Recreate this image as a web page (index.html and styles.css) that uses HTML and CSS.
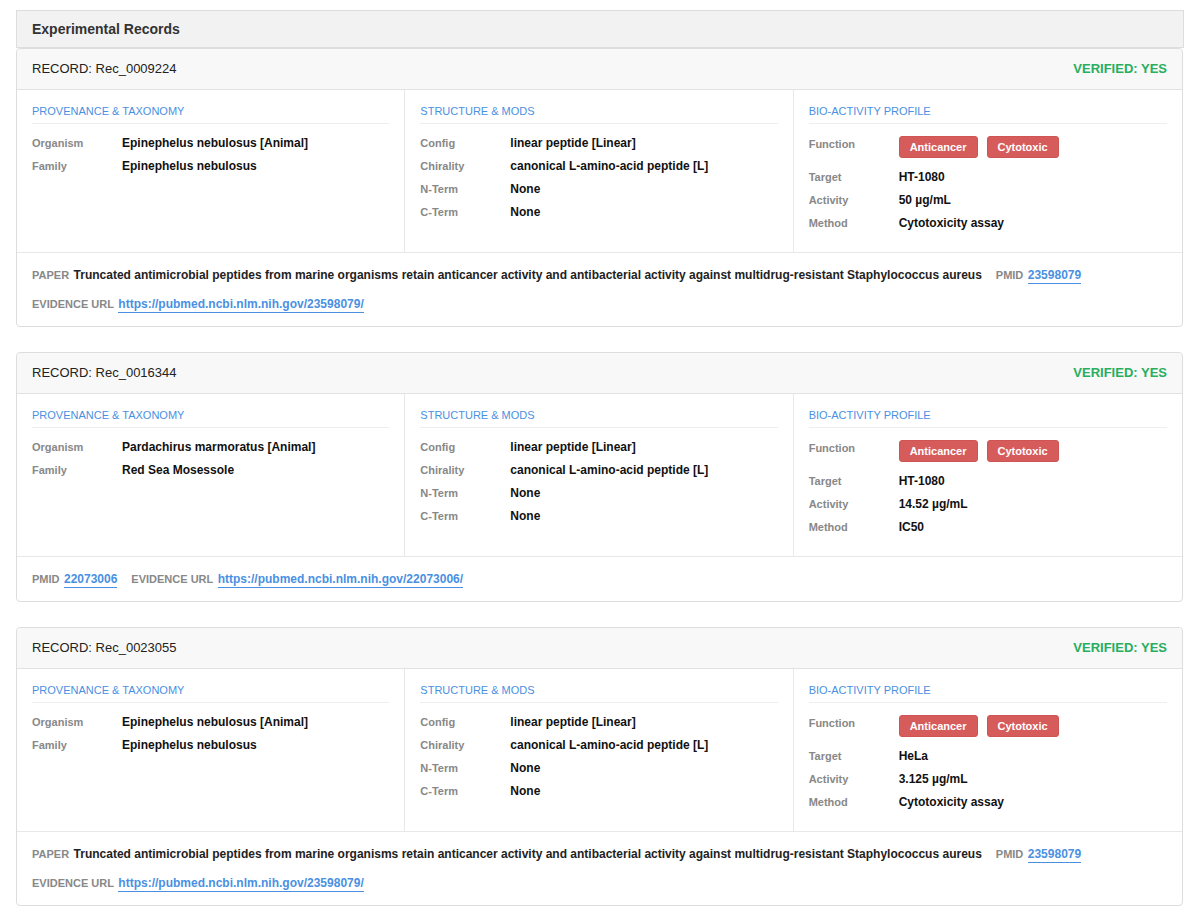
FILE: index.html
```html
<!DOCTYPE html>
<html>
<head>
    <title>Experimental Records</title>
    <link rel="stylesheet" href="styles.css">
</head>
<body>
    <div class="records">
        <div class="panel-head">Experimental Records</div>

        <div class="card">
            <div class="card-head">
                <span class="rec-id">RECORD: Rec_0009224</span>
                <span class="verified">VERIFIED: YES</span>
            </div>
            <div class="card-body">
                <div class="col">
                    <div class="col-title">Provenance &amp; Taxonomy</div>
                    <div class="row"><span class="label">Organism</span><span class="value">Epinephelus nebulosus [Animal]</span></div>
                    <div class="row"><span class="label">Family</span><span class="value">Epinephelus nebulosus</span></div>
                </div>
                <div class="col">
                    <div class="col-title">Structure &amp; Mods</div>
                    <div class="row"><span class="label">Config</span><span class="value">linear peptide [Linear]</span></div>
                    <div class="row"><span class="label">Chirality</span><span class="value">canonical L-amino-acid peptide [L]</span></div>
                    <div class="row"><span class="label">N-Term</span><span class="value">None</span></div>
                    <div class="row"><span class="label">C-Term</span><span class="value">None</span></div>
                </div>
                <div class="col">
                    <div class="col-title">Bio-Activity Profile</div>
                    <div class="row row-tags"><span class="label">Function</span><span class="tags"><span class="tag">Anticancer</span><span class="tag">Cytotoxic</span></span></div>
                    <div class="row"><span class="label">Target</span><span class="value">HT-1080</span></div>
                    <div class="row"><span class="label">Activity</span><span class="value">50 µg/mL</span></div>
                    <div class="row"><span class="label">Method</span><span class="value">Cytotoxicity assay</span></div>
                </div>
            </div>
            <div class="card-foot">
                <span class="ref"><span class="ref-label">Paper</span> <span class="paper">Truncated antimicrobial peptides from marine organisms retain anticancer activity and antibacterial activity against multidrug-resistant Staphylococcus aureus</span></span>
                <span class="ref"><span class="ref-label">PMID</span> <a class="pmid" href="#">23598079</a></span>
                <span class="ref"><span class="ref-label">Evidence URL</span> <a class="url" href="#">https://pubmed.ncbi.nlm.nih.gov/23598079/</a></span>
            </div>
        </div>

        <div class="card">
            <div class="card-head">
                <span class="rec-id">RECORD: Rec_0016344</span>
                <span class="verified">VERIFIED: YES</span>
            </div>
            <div class="card-body">
                <div class="col">
                    <div class="col-title">Provenance &amp; Taxonomy</div>
                    <div class="row"><span class="label">Organism</span><span class="value">Pardachirus marmoratus [Animal]</span></div>
                    <div class="row"><span class="label">Family</span><span class="value">Red Sea Mosessole</span></div>
                </div>
                <div class="col">
                    <div class="col-title">Structure &amp; Mods</div>
                    <div class="row"><span class="label">Config</span><span class="value">linear peptide [Linear]</span></div>
                    <div class="row"><span class="label">Chirality</span><span class="value">canonical L-amino-acid peptide [L]</span></div>
                    <div class="row"><span class="label">N-Term</span><span class="value">None</span></div>
                    <div class="row"><span class="label">C-Term</span><span class="value">None</span></div>
                </div>
                <div class="col">
                    <div class="col-title">Bio-Activity Profile</div>
                    <div class="row row-tags"><span class="label">Function</span><span class="tags"><span class="tag">Anticancer</span><span class="tag">Cytotoxic</span></span></div>
                    <div class="row"><span class="label">Target</span><span class="value">HT-1080</span></div>
                    <div class="row"><span class="label">Activity</span><span class="value">14.52 µg/mL</span></div>
                    <div class="row"><span class="label">Method</span><span class="value">IC50</span></div>
                </div>
            </div>
            <div class="card-foot">
                <span class="ref"><span class="ref-label">PMID</span> <a class="pmid" href="#">22073006</a></span>
                <span class="ref"><span class="ref-label">Evidence URL</span> <a class="url" href="#">https://pubmed.ncbi.nlm.nih.gov/22073006/</a></span>
            </div>
        </div>

        <div class="card">
            <div class="card-head">
                <span class="rec-id">RECORD: Rec_0023055</span>
                <span class="verified">VERIFIED: YES</span>
            </div>
            <div class="card-body">
                <div class="col">
                    <div class="col-title">Provenance &amp; Taxonomy</div>
                    <div class="row"><span class="label">Organism</span><span class="value">Epinephelus nebulosus [Animal]</span></div>
                    <div class="row"><span class="label">Family</span><span class="value">Epinephelus nebulosus</span></div>
                </div>
                <div class="col">
                    <div class="col-title">Structure &amp; Mods</div>
                    <div class="row"><span class="label">Config</span><span class="value">linear peptide [Linear]</span></div>
                    <div class="row"><span class="label">Chirality</span><span class="value">canonical L-amino-acid peptide [L]</span></div>
                    <div class="row"><span class="label">N-Term</span><span class="value">None</span></div>
                    <div class="row"><span class="label">C-Term</span><span class="value">None</span></div>
                </div>
                <div class="col">
                    <div class="col-title">Bio-Activity Profile</div>
                    <div class="row row-tags"><span class="label">Function</span><span class="tags"><span class="tag">Anticancer</span><span class="tag">Cytotoxic</span></span></div>
                    <div class="row"><span class="label">Target</span><span class="value">HeLa</span></div>
                    <div class="row"><span class="label">Activity</span><span class="value">3.125 µg/mL</span></div>
                    <div class="row"><span class="label">Method</span><span class="value">Cytotoxicity assay</span></div>
                </div>
            </div>
            <div class="card-foot">
                <span class="ref"><span class="ref-label">Paper</span> <span class="paper">Truncated antimicrobial peptides from marine organisms retain anticancer activity and antibacterial activity against multidrug-resistant Staphylococcus aureus</span></span>
                <span class="ref"><span class="ref-label">PMID</span> <a class="pmid" href="#">23598079</a></span>
                <span class="ref"><span class="ref-label">Evidence URL</span> <a class="url" href="#">https://pubmed.ncbi.nlm.nih.gov/23598079/</a></span>
            </div>
        </div>
    </div>
</body>
</html>
```

FILE: styles.css
```css
body {
    margin: 0;
    padding: 10px 8px 0 16px;
    background-color: #fff;
    font-family: "Liberation Sans", Arial, sans-serif;
    color: #333;
}

.panel-head {
    background-color: #f2f2f2;
    border: 1px solid #ddd;
    padding: 10px 15px;
    font-size: 14px;
    line-height: 16px;
    font-weight: bold;
    color: #333;
}

.card {
    border: 1px solid #ddd;
    border-radius: 4px;
    background-color: #fff;
    margin-bottom: 25px;
    margin-right: 1px;
}

.card:first-of-type {
    border-top: none;
}

.card-head {
    display: flex;
    justify-content: space-between;
    align-items: center;
    background-color: #f8f8f8;
    border-bottom: 1px solid #e2e2e2;
    padding: 12px 15px;
    font-size: 13px;
    line-height: 16px;
    border-radius: 4px 4px 0 0;
}

.rec-id {
    color: #222;
}

.verified {
    color: #27ae60;
    font-weight: bold;
}

.card-body {
    display: grid;
    grid-template-columns: repeat(3, 1fr);
    border-bottom: 1px solid #e8e8e8;
}

.col {
    padding: 15px 15px 13px;
    border-right: 1px solid #e8e8e8;
}

.col:last-child {
    border-right: none;
}

.col-title {
    font-size: 11px;
    line-height: 13px;
    text-transform: uppercase;
    color: #4a90e2;
    padding-bottom: 5px;
    border-bottom: 1px solid #eee;
    margin-bottom: 12px;
}

.row {
    display: flex;
    align-items: flex-start;
    margin-bottom: 9px;
    line-height: 14px;
}

.row-tags .label {
    padding-top: 1px;
}

.label {
    width: 90px;
    flex-shrink: 0;
    font-size: 11px;
    font-weight: bold;
    color: #888;
}

.value {
    font-size: 12px;
    font-weight: bold;
    color: #111;
}

.tags {
    display: flex;
    gap: 9px;
    padding-bottom: 3px;
}

.tag {
    display: inline-block;
    background-color: #d65c5c;
    color: #fff;
    font-size: 11px;
    font-weight: bold;
    line-height: 20px;
    padding: 0 10px;
    border: 1px solid #cf5454;
    border-radius: 3px;
}

.card-foot {
    display: flex;
    flex-wrap: wrap;
    column-gap: 14px;
    row-gap: 8px;
    padding: 11px 15px 12px;
    line-height: 20px;
}

.ref-label {
    font-size: 11px;
    font-weight: bold;
    color: #888;
    text-transform: uppercase;
}

.paper {
    font-size: 12px;
    font-weight: bold;
    color: #222;
}

.pmid,
.url {
    color: #4a90e2;
    font-size: 12px;
    font-weight: bold;
    text-decoration: none;
    border-bottom: 1px solid #4a90e2;
    padding-bottom: 1px;
}
```
